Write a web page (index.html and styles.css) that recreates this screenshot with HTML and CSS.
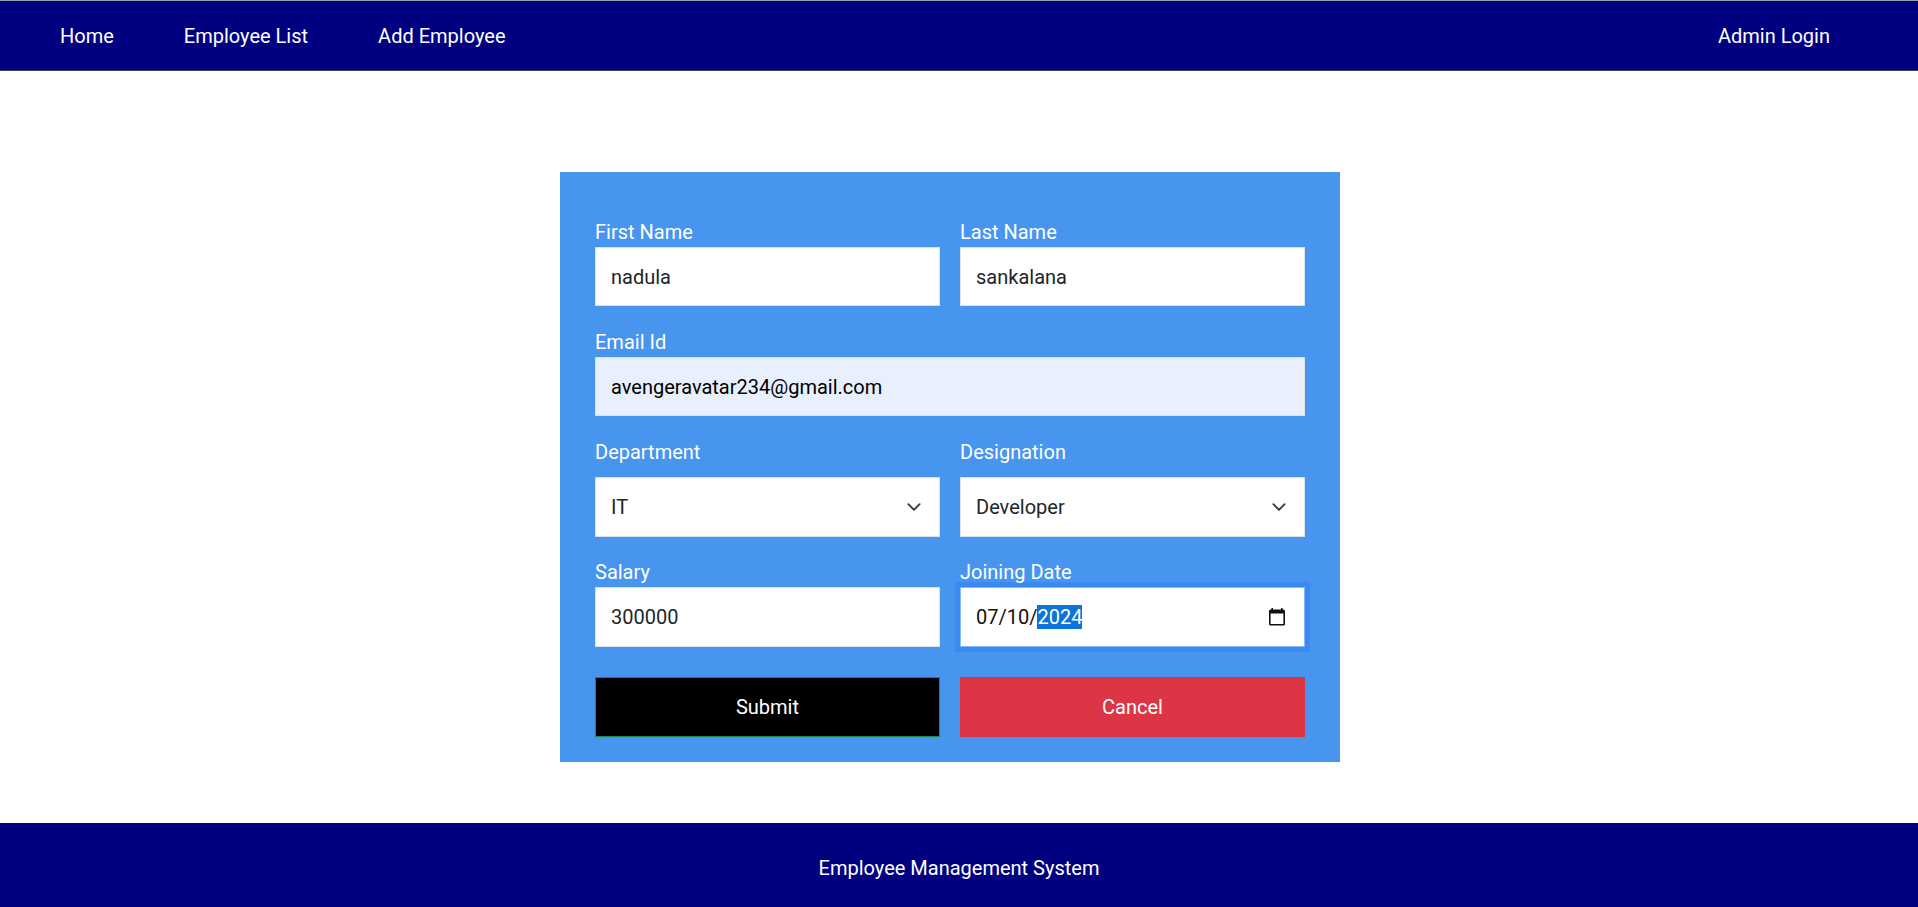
FILE: index.html
```html
<!DOCTYPE html>
<html lang="en">
<head>
<meta charset="utf-8">
<title>Employee Management System</title>
<link rel="stylesheet" href="styles.css">
</head>
<body>
<header class="topbar">
  <nav class="nav-links">
    <a href="#" class="nav-link">Home</a>
    <a href="#" class="nav-link">Employee List</a>
    <a href="#" class="nav-link">Add Employee</a>
  </nav>
  <nav class="nav-links">
    <a href="#" class="nav-link">Admin Login</a>
  </nav>
</header>

<main class="content">
  <form class="emp-card">
    <div class="form-row">
      <div class="field">
        <label class="field-label">First Name</label>
        <input class="field-input" type="text" value="nadula">
      </div>
      <div class="field">
        <label class="field-label">Last Name</label>
        <input class="field-input" type="text" value="sankalana">
      </div>
    </div>

    <div class="form-row form-row-single">
      <div class="field">
        <label class="field-label">Email Id</label>
        <input class="field-input field-autofill" type="email" value="avengeravatar234@gmail.com">
      </div>
    </div>

    <div class="form-row">
      <div class="field">
        <label class="field-label">Department</label>
        <div class="select-wrap">
          <select class="field-input field-select">
            <option>IT</option>
          </select>
          <svg class="chevron" width="20" height="15" viewBox="0 0 16 16"><path d="m2 5 6 6 6-6" fill="none" stroke="#343a40" stroke-width="2" stroke-linecap="round" stroke-linejoin="round"/></svg>
        </div>
      </div>
      <div class="field">
        <label class="field-label">Designation</label>
        <div class="select-wrap">
          <select class="field-input field-select">
            <option>Developer</option>
          </select>
          <svg class="chevron" width="20" height="15" viewBox="0 0 16 16"><path d="m2 5 6 6 6-6" fill="none" stroke="#343a40" stroke-width="2" stroke-linecap="round" stroke-linejoin="round"/></svg>
        </div>
      </div>
    </div>

    <div class="form-row form-row-last">
      <div class="field">
        <label class="field-label">Salary</label>
        <input class="field-input" type="text" value="300000">
      </div>
      <div class="field">
        <label class="field-label">Joining Date</label>
        <div class="field-input date-input">
          <span class="date-text">07/10/<span class="date-sel">2024</span></span>
          <svg class="cal-icon" width="16" height="17.6" viewBox="2 1 20 22"><path d="M20 3h-1V1h-2v2H7V1H5v2H4c-1.1 0-2 .9-2 2v16c0 1.1.9 2 2 2h16c1.1 0 2-.9 2-2V5c0-1.1-.9-2-2-2zm0 18H4V8h16v13z" fill="#111"/></svg>
        </div>
      </div>
    </div>

    <div class="form-row">
      <button type="button" class="btn btn-submit">Submit</button>
      <button type="button" class="btn btn-cancel">Cancel</button>
    </div>
  </form>
</main>

<footer class="footer">Employee Management System</footer>
</body>
</html>
```
FILE: styles.css
```css
* {
  box-sizing: border-box;
}

html, body {
  margin: 0;
  padding: 0;
}

body {
  height: 100vh;
  display: flex;
  flex-direction: column;
  font-family: Roboto, "Liberation Sans", Arial, sans-serif;
  font-size: 20px;
  line-height: 1.5;
  color: #212529;
  background: #ffffff;
  overflow: hidden;
}

.topbar {
  height: 71px;
  flex: 0 0 auto;
  display: flex;
  align-items: center;
  justify-content: space-between;
  background: #000080;
  border-top: 1px solid #8c9ea6;
  border-bottom: 1px solid #3d3d5e;
  padding: 0 88px 0 60px;
}

.nav-links {
  display: flex;
  gap: 70px;
}

.nav-link {
  color: #ffffff;
  text-decoration: none;
}

.content {
  flex: 1 1 auto;
}

.emp-card {
  width: 780px;
  margin: 101px 0 0 560px;
  background: #4895ef;
  padding: 45px 35px 25px;
}

.form-row {
  display: grid;
  grid-template-columns: 1fr 1fr;
  column-gap: 20px;
  margin-bottom: 20.6px;
}

.form-row:last-child {
  margin-bottom: 0;
}

.form-row-single {
  grid-template-columns: 1fr;
}

.form-row-last {
  margin-bottom: 30.8px;
}

.field-label {
  display: block;
  color: #ffffff;
  height: 30px;
}

.field-input {
  display: block;
  width: 100%;
  height: 59.4px;
  margin: 0;
  border: 1px solid #dee2e6;
  border-radius: 0;
  padding: 0 15px;
  background: #ffffff;
  color: #212529;
  font: inherit;
  line-height: 30px;
  outline: none;
}

.field-autofill {
  background: #e8f0fe;
  color: #000000;
}

.select-wrap {
  position: relative;
  margin-top: 10.3px;
}

.field-select {
  appearance: none;
  -webkit-appearance: none;
}

.chevron {
  position: absolute;
  right: 16px;
  top: 50%;
  transform: translateY(-50%);
  pointer-events: none;
}

.date-input {
  display: flex;
  align-items: center;
  justify-content: space-between;
  border-color: #86b7fe;
  box-shadow: 0 0 0 5px rgba(13, 110, 253, 0.25);
  padding: 0 19px 0 15px;
}

.date-text {
  color: #111111;
}

.date-sel {
  background: #0a74d8;
  color: #ffffff;
}

.cal-icon {
  display: block;
}

.btn {
  height: 59.4px;
  font: inherit;
  color: #ffffff;
  border-radius: 0;
  cursor: pointer;
  padding: 0;
}

.btn-submit {
  background: #000000;
  border: 1px solid #198754;
}

.btn-cancel {
  background: #dc3545;
  border: 1px solid #dc3545;
}

.footer {
  height: 84px;
  flex: 0 0 auto;
  background: #000080;
  color: #ffffff;
  text-align: center;
  padding-top: 30px;
}
```
